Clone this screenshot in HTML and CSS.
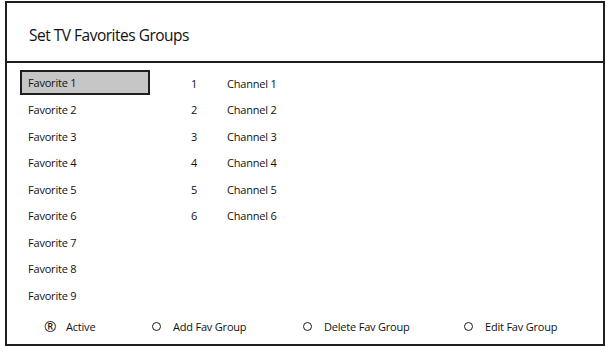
FILE: index.html
```html
<!DOCTYPE html>
<html lang="en">
<head>
  <meta charset="UTF-8" />
  <title>Set TV Favorites Groups</title>
  <link rel="stylesheet" href="styles.css">
</head>
<body>

<div class="frame">
  <header>
    <h1>Set TV Favorites Groups</h1>
  </header>

  <section class="lists">
    <ul class="groups">
      <li class="selected">Favorite 1</li>
      <li>Favorite 2</li>
      <li>Favorite 3</li>
      <li>Favorite 4</li>
      <li>Favorite 5</li>
      <li>Favorite 6</li>
      <li>Favorite 7</li>
      <li>Favorite 8</li>
      <li>Favorite 9</li>
    </ul>

    <ul class="channels">
      <li><span class="num">1</span><span>Channel 1</span></li>
      <li><span class="num">2</span><span>Channel 2</span></li>
      <li><span class="num">3</span><span>Channel 3</span></li>
      <li><span class="num">4</span><span>Channel 4</span></li>
      <li><span class="num">5</span><span>Channel 5</span></li>
      <li><span class="num">6</span><span>Channel 6</span></li>
    </ul>
  </section>

  <footer class="actions">
    <div class="action"><span class="icon">&reg;</span>Active</div>
    <div class="action"><span class="radio"></span>Add Fav Group</div>
    <div class="action"><span class="radio"></span>Delete Fav Group</div>
    <div class="action"><span class="radio"></span>Edit Fav Group</div>
  </footer>
</div>

</body>
</html>
```

FILE: styles.css
```css
* {
  box-sizing: border-box;
}

body {
  margin: 0;
  background: #ffffff;
  color: #111111;
  font-family: "Open Sans", "Noto Sans", sans-serif;
}

.frame {
  width: 600px;
  height: 345px;
  margin: 1px 0 0 5px;
  border: 2px solid #1e1e1e;
  display: flex;
  flex-direction: column;
}

header {
  height: 60px;
  border-bottom: 2px solid #1e1e1e;
  display: flex;
  align-items: center;
  padding: 6px 0 0 22px;
}

header h1 {
  margin: 0;
  font-size: 15.5px;
  font-weight: 400;
  letter-spacing: -0.5px;
}

ul {
  list-style: none;
  margin: 0;
  padding: 0;
}

li {
  height: 26.5px;
  display: flex;
  align-items: center;
  font-size: 11px;
  letter-spacing: -0.2px;
}

.lists {
  display: flex;
  padding: 7px 0 0 13px;
  height: 247px;
}

.groups {
  width: 130px;
}

.groups li {
  padding-left: 6px;
  border: 2px solid transparent;
}

.groups li.selected {
  background: #c6c6c6;
  border-color: #1e1e1e;
  height: 25px;
  margin-bottom: 1.5px;
}

.channels {
  margin-left: 41px;
}

.num {
  width: 36px;
}

.actions {
  display: grid;
  grid-template-columns: 108px 151px 161px auto;
  align-items: center;
  padding: 9px 0 0 37px;
  font-size: 11px;
  letter-spacing: -0.2px;
}

.action {
  display: flex;
  align-items: center;
}

.icon {
  width: 22px;
  font-size: 15px;
  line-height: 1;
}

.radio {
  width: 9px;
  height: 9px;
  border: 1px solid #1c1c1c;
  border-radius: 50%;
  margin-right: 12px;
}
```
